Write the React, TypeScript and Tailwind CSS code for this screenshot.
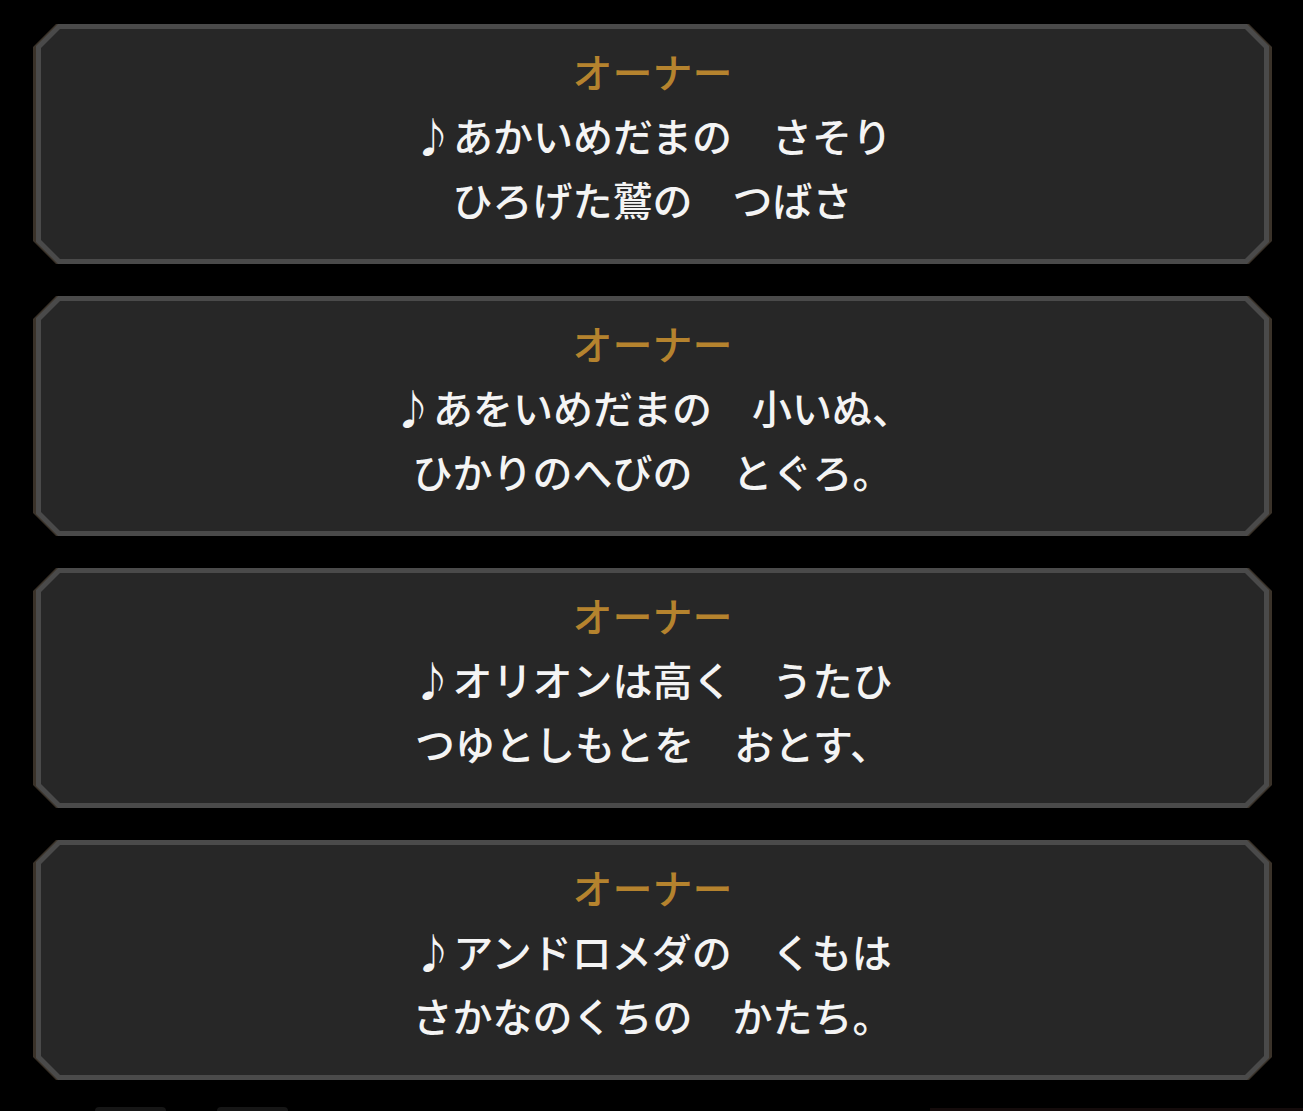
import React from "react";

const cards: string[][] = [
  ["あかいめだまの　さそり", "ひろげた鷲の　つばさ"],
  ["あをいめだまの　小いぬ、", "ひかりのへびの　とぐろ。"],
  ["オリオンは高く　うたひ", "つゆとしもとを　おとす、"],
  ["アンドロメダの　くもは", "さかなのくちの　かたち。"],
];

function Card({ lines }: { lines: string[] }) {
  return (
    <div className="h-[240px] bg-[#3a3229] px-[3px] [clip-path:polygon(23px_0,calc(100%_-_23px)_0,100%_23px,100%_calc(100%_-_23px),calc(100%_-_23px)_100%,23px_100%,0_calc(100%_-_23px),0_23px)]">
      <div className="h-full bg-[#4a4a4a] p-[5px] [clip-path:polygon(22px_0,calc(100%_-_22px)_0,100%_22px,100%_calc(100%_-_22px),calc(100%_-_22px)_100%,22px_100%,0_calc(100%_-_22px),0_22px)]">
        <div className="h-full bg-[#272727] pt-[10px] flex flex-col items-center [clip-path:polygon(19px_0,calc(100%_-_19px)_0,100%_19px,100%_calc(100%_-_19px),calc(100%_-_19px)_100%,19px_100%,0_calc(100%_-_19px),0_19px)]">
          <div className="text-[40px] leading-[64px] font-medium text-[#b5832e] whitespace-pre">オーナー</div>
          <div className="text-[40px] leading-[64px] font-medium text-[#f4f4f4] whitespace-pre">
            <span className="font-light">♪</span>
            {lines[0]}
          </div>
          <div className="text-[40px] leading-[64px] font-medium text-[#f4f4f4] whitespace-pre">{lines[1]}</div>
        </div>
      </div>
    </div>
  );
}

export default function App() {
  return (
    <div
      className="w-[1303px] h-[1111px] overflow-hidden bg-black flex flex-col pt-[24px] pl-[33px] pr-[31px]"
      style={{ fontFamily: '"Noto Sans CJK JP", "Noto Sans", sans-serif' }}
    >
      <div className="flex flex-col gap-[32px]">
        {cards.map((c, i) => (
          <Card key={i} lines={c} />
        ))}
      </div>
      <div className="flex items-start mt-[27px] -ml-[33px] -mr-[31px] h-[4px]">
        <div className="ml-[95px] w-[71px] h-[4px] bg-[#161616] rounded-t-sm" />
        <div className="ml-[51px] w-[71px] h-[4px] bg-[#161616] rounded-t-sm" />
        <div className="ml-auto w-[373px] h-[3px] mt-[1px] bg-[#140b0b]" />
      </div>
    </div>
  );
}
